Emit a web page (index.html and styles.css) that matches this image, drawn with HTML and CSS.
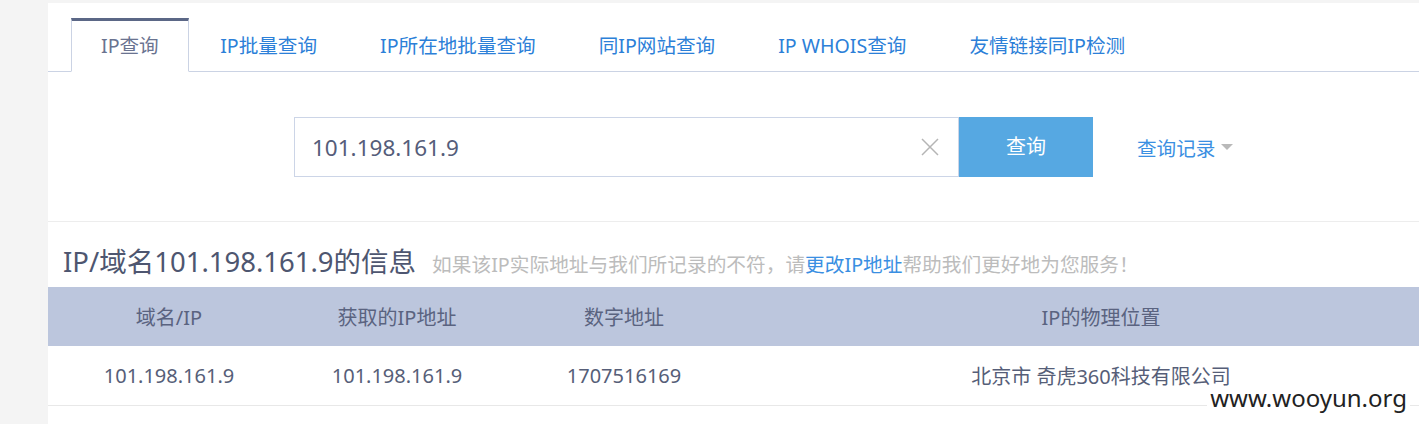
FILE: index.html
```html
<!DOCTYPE html>
<html lang="zh-CN">
<head>
<meta charset="utf-8">
<title>IP查询</title>
<link rel="stylesheet" href="styles.css">
</head>
<body>
<div class="page">
  <div class="panel">
    <ul class="tabs">
      <li class="tab active">IP查询</li>
      <li class="tab">IP批量查询</li>
      <li class="tab">IP所在地批量查询</li>
      <li class="tab">同IP网站查询</li>
      <li class="tab">IP WHOIS查询</li>
      <li class="tab">友情链接同IP检测</li>
    </ul>
    <div class="search">
      <div class="input">
        <span class="input-text">101.198.161.9</span>
        <svg class="clear" width="20" height="20" viewBox="0 0 20 20"><path d="M2 2L18 18M18 2L2 18" stroke="#b5b5b5" stroke-width="1.5" fill="none"/></svg>
      </div>
      <div class="btn">查询</div>
      <div class="history">查询记录<span class="caret"></span></div>
    </div>
    <div class="info-title">
      <h2 class="title">IP/域名101.198.161.9的信息</h2>
      <span class="note">如果该IP实际地址与我们所记录的不符，请<a class="note-link">更改IP地址</a>帮助我们更好地为您服务！</span>
    </div>
    <table class="result">
      <thead>
        <tr><th class="c1">域名/IP</th><th class="c2">获取的IP地址</th><th class="c3">数字地址</th><th class="c4">IP的物理位置</th></tr>
      </thead>
      <tbody>
        <tr><td>101.198.161.9</td><td>101.198.161.9</td><td>1707516169</td><td>北京市 奇虎360科技有限公司</td></tr>
      </tbody>
    </table>
  </div>
</div>
<div class="watermark">www.wooyun.org</div>
</body>
</html>
```
FILE: styles.css
```css
html, body {
  margin: 0;
  padding: 0;
}
body {
  background: #f4f4f4;
  width: 1419px;
  height: 424px;
  overflow: hidden;
  position: relative;
  font-family: "Noto Sans", "Noto Sans CJK SC", sans-serif;
  color: #565e78;
}
.page {
  padding: 3px 0 0 48px;
}
.panel {
  background: #fff;
  width: 1410px;
  height: 430px;
}
.tabs {
  list-style: none;
  margin: 0;
  padding: 15px 0 0 23px;
  display: flex;
  border-bottom: 1px solid #cbd3e4;
}
.tab {
  padding: 0 30.5px;
  height: 50px;
  line-height: 50px;
  font-size: 19.6px;
  color: #2c80d8;
  border: 1px solid transparent;
  border-top-width: 3px;
  margin-bottom: -1px;
}
.tab.active {
  color: #6a7390;
  border-color: #cbd3e4;
  border-top-color: #5b6786;
  border-bottom-color: #fff;
  background: #fff;
  padding: 0 29px;
}
.search {
  display: flex;
  align-items: center;
  padding: 45px 0 44px 246px;
  border-bottom: 1px solid #ededed;
}
.input {
  box-sizing: border-box;
  width: 665px;
  height: 60px;
  border: 1px solid #ccd5e7;
  display: flex;
  align-items: center;
  justify-content: space-between;
  padding: 0 18px 0 17px;
}
.input-text {
  font-size: 22.5px;
  color: #555d7a;
}
.clear {
  display: block;
}
.btn {
  width: 134px;
  height: 60px;
  line-height: 60px;
  text-align: center;
  background: #56a8e2;
  color: #fff;
  font-size: 20px;
}
.history {
  margin-left: 44px;
  font-size: 19.6px;
  color: #3a8fe2;
  display: flex;
  align-items: center;
}
.caret {
  width: 0;
  height: 0;
  border-left: 6px solid transparent;
  border-right: 6px solid transparent;
  border-top: 6px solid #b9b9b9;
  margin-left: 6px;
}
.info-title {
  display: flex;
  align-items: baseline;
  padding: 15px 0 0 15px;
  height: 50px;
}
.title {
  margin: 0;
  font-weight: normal;
  font-size: 27.5px;
  line-height: 50px;
  color: #4e5670;
}
.note {
  margin-left: 16px;
  font-size: 19.7px;
  color: #bcbcbc;
}
.note-link {
  color: #3a8fe2;
}
.result {
  border-collapse: collapse;
  table-layout: fixed;
  width: 1410px;
}
.result th {
  background: #bcc6dd;
  height: 59px;
  padding: 0;
  font-weight: normal;
  font-size: 20px;
  color: #5a6380;
}
.result td {
  height: 59px;
  padding: 0;
  text-align: center;
  font-size: 20px;
  color: #565e78;
  border-bottom: 1px solid #e8e8e8;
}
.c1 { width: 242px; }
.c2 { width: 214px; }
.c3 { width: 240px; }
.c4 { width: 714px; }
.watermark {
  position: absolute;
  right: 9px;
  top: 386px;
  background: #fff;
  font-family: "Noto Sans", sans-serif;
  font-size: 24px;
  line-height: 24px;
  color: #222;
  padding: 0 3px 2px;
}
```
